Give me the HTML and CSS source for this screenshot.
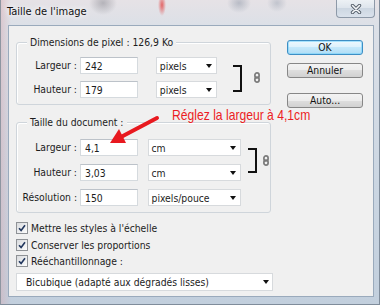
FILE: index.html
```html
<!DOCTYPE html>
<html lang="fr">
<head>
    <meta charset="UTF-8">
    <meta name="viewport" content="width=device-width, initial-scale=1.0">
    <title>Taille de l'image</title>
    <link rel="stylesheet" href="styles.css">
</head>
<body>
    <div class="window">
        <div class="titlebar">
            <span class="title">Taille de l'image</span>
            <span class="close">
                <svg width="12" height="10" viewBox="0 0 12 10">
                    <path d="M2.5 1.5 L9.5 8.5 M9.5 1.5 L2.5 8.5" stroke="#56606c" stroke-width="3.4" stroke-linecap="round"/>
                    <path d="M2.5 1.5 L9.5 8.5 M9.5 1.5 L2.5 8.5" stroke="#f4f6f8" stroke-width="1.6" stroke-linecap="round"/>
                </svg>
            </span>
        </div>

        <div class="client">
            <div class="main">
                <div class="group group-pixels">
                    <div class="legend">Dimensions de pixel : 126,9 Ko</div>
                    <div class="fields fields-two">
                        <label class="lbl">Largeur :</label>
                        <input class="num" type="text" value="242">
                        <div class="combo combo-sm"><span>pixels</span><span class="caret"></span></div>

                        <label class="lbl">Hauteur :</label>
                        <input class="num" type="text" value="179">
                        <div class="combo combo-sm"><span>pixels</span><span class="caret"></span></div>

                        <span class="bracket"></span>
                        <svg class="chain" width="6" height="11" viewBox="0 0 6 11">
                            <rect x="0.9" y="0.9" width="4.2" height="5" rx="2.1" fill="none" stroke="#7a7a7a" stroke-width="1.7"/>
                            <rect x="0.9" y="5.1" width="4.2" height="5" rx="2.1" fill="none" stroke="#7a7a7a" stroke-width="1.7"/>
                        </svg>
                    </div>
                </div>

                <div class="group group-doc">
                    <div class="legend">Taille du document :</div>
                    <div class="fields fields-three">
                        <label class="lbl">Largeur :</label>
                        <input class="num" type="text" value="4,1">
                        <div class="combo combo-md"><span>cm</span><span class="caret"></span></div>

                        <label class="lbl">Hauteur :</label>
                        <input class="num" type="text" value="3,03">
                        <div class="combo combo-md"><span>cm</span><span class="caret"></span></div>

                        <label class="lbl">Résolution :</label>
                        <input class="num" type="text" value="150">
                        <div class="combo combo-md"><span>pixels/pouce</span><span class="caret"></span></div>

                        <span class="bracket"></span>
                        <svg class="chain" width="6" height="11" viewBox="0 0 6 11">
                            <rect x="0.9" y="0.9" width="4.2" height="5" rx="2.1" fill="none" stroke="#7a7a7a" stroke-width="1.7"/>
                            <rect x="0.9" y="5.1" width="4.2" height="5" rx="2.1" fill="none" stroke="#7a7a7a" stroke-width="1.7"/>
                        </svg>
                    </div>
                </div>

                <div class="opts">
                    <div class="opt"><span class="check"><svg width="8" height="8" viewBox="0 0 8 8"><path d="M1 4.2 L3.1 6.4 L7 1.2" fill="none" stroke="#22375e" stroke-width="1.6"/></svg></span>Mettre les styles à l'échelle</div>
                    <div class="opt"><span class="check"><svg width="8" height="8" viewBox="0 0 8 8"><path d="M1 4.2 L3.1 6.4 L7 1.2" fill="none" stroke="#22375e" stroke-width="1.6"/></svg></span>Conserver les proportions</div>
                    <div class="opt"><span class="check"><svg width="8" height="8" viewBox="0 0 8 8"><path d="M1 4.2 L3.1 6.4 L7 1.2" fill="none" stroke="#22375e" stroke-width="1.6"/></svg></span>Rééchantillonnage :</div>
                </div>

                <div class="combo combo-lg"><span>Bicubique (adapté aux dégradés lisses)</span><span class="caret"></span></div>
            </div>

            <div class="buttons">
                <button class="btn btn-default">OK</button>
                <button class="btn btn-cancel">Annuler</button>
                <button class="btn btn-auto">Auto...</button>
            </div>
        </div>
    </div>

    <!-- annotation drawn over the dialog -->
    <div class="note">Réglez la largeur à 4,1cm</div>
    <svg class="arrow" width="380" height="305" viewBox="0 0 380 305">
        <line x1="157" y1="118" x2="121" y2="137" stroke="#e8191f" stroke-width="4" stroke-linecap="round"/>
        <polygon points="110,143 126,143 119,129" fill="#e8191f"/>
    </svg>
</body>
</html>
```

FILE: styles.css
```css
* {
    box-sizing: border-box;
}

body {
    position: relative;
    margin: 0;
    width: 380px;
    height: 305px;
    overflow: hidden;
    background-color: #dfe7ef;
    color: #1c1c1c;
    font-family: "DejaVu Sans Condensed", "DejaVu Sans", sans-serif;
    font-stretch: condensed;
    font-size: 10.3px;
}

.window {
    width: 380px;
    height: 305px;
    display: flex;
    flex-direction: column;
    border-left: 1px solid #8e96a1;
    border-right: 1px solid #7f8c9b;
    border-bottom: 1px solid #7f8c9b;
    background:
        radial-gradient(ellipse 14px 12px at 102px 3px, rgba(140, 140, 148, 0.55), transparent),
        radial-gradient(ellipse 4px 11px at 161px 5px, rgba(226, 58, 58, 0.75), transparent),
        radial-gradient(ellipse 12px 10px at 238px 3px, rgba(140, 150, 166, 0.5), transparent),
        radial-gradient(ellipse 10px 9px at 276px 3px, rgba(150, 160, 176, 0.45), transparent),
        linear-gradient(to right, rgba(214, 170, 178, 0.45) 0, rgba(214, 170, 178, 0) 10px),
        linear-gradient(#e6e2e6 0, #dce0e7 25px, #cbd6e2 60%, #c2cfdd 100%);
}

.titlebar {
    height: 25px;
    display: flex;
    align-items: flex-start;
}

.title {
    margin: 5px 0 0 6px;
    font-size: 11px;
    line-height: 14px;
    color: #111;
    text-shadow: 0 0 5px #fff, 0 0 8px #fff;
}

.close {
    margin-left: auto;
    margin-right: 4px;
    width: 39px;
    height: 18px;
    display: flex;
    align-items: center;
    justify-content: center;
    border: 1px solid #8d99a8;
    border-top: none;
    border-radius: 0 0 4px 4px;
    background: linear-gradient(#edf1f5 0, #dde4ec 50%, #cdd7e2 50%, #dae2ec 100%);
}

.client {
    margin: 0 5px 0 7px;
    width: 366px;
    height: 272px;
    display: flex;
    border: 1px solid #9aaabc;
    background-color: #f0f0f0;
}

.main {
    width: 264px;
    padding-left: 7px;
}

.group {
    width: 255px;
    border: 1px solid #cfd5db;
    border-radius: 3px;
    box-shadow: inset 1px 1px 0 #fff;
}

.group-pixels {
    margin-top: 16px;
    padding-bottom: 6px;
}

.group-doc {
    margin-top: 17px;
    padding-bottom: 6px;
}

.legend {
    width: fit-content;
    margin: -7px 0 0 10px;
    padding: 0 3px;
    line-height: 12px;
    background-color: #f0f0f0;
}

.fields {
    display: grid;
    grid-template-columns: 60px auto auto auto auto;
    align-items: center;
}

.fields-two {
    margin-top: 9px;
    grid-template-rows: 17px 17px;
    row-gap: 7px;
}

.fields-three {
    margin-top: 11px;
    grid-template-rows: 17px 17px 17px;
    row-gap: 8px;
}

.lbl {
    text-align: right;
    line-height: 17px;
    white-space: nowrap;
}

.num {
    width: 58px;
    height: 17px;
    margin: 0 0 0 3px;
    padding: 0 0 0 4px;
    border: 1px solid #d5dade;
    border-top-color: #bcc2c9;
    background-color: #fff;
    color: #1c1c1c;
    font: inherit;
    outline: none;
}

.combo {
    height: 17px;
    display: flex;
    align-items: center;
    padding-left: 3px;
    border: 1px solid #d7dadd;
    background-color: #fff;
    white-space: nowrap;
}

.combo-sm {
    width: 61px;
    margin-left: 8px;
}

.combo-md {
    width: 93px;
    margin-left: 8px;
}

.combo-lg {
    width: 257px;
    height: 18px;
    margin-top: 3.5px;
    padding-left: 9px;
}

.caret {
    margin-left: auto;
    margin-right: 4px;
    border-left: 3px solid transparent;
    border-right: 3px solid transparent;
    border-top: 4px solid #111;
}

.combo-lg .caret {
    margin-right: 3px;
}

.bracket {
    grid-column: 4;
    grid-row: 1 / span 2;
    align-self: stretch;
    width: 9px;
    border: 2px solid #111;
    border-left: none;
}

.fields-two .bracket {
    margin: 8px 0 6px 6px;
}

.fields-three .bracket {
    margin: 9px 0 8px 6px;
}

.chain {
    grid-column: 5;
    grid-row: 1 / span 2;
    display: block;
    margin-left: 3px;
}

.fields-three .chain {
    margin-left: 4px;
}

.opts {
    margin-top: 7px;
}

.opt {
    height: 16.5px;
    display: flex;
    align-items: center;
    white-space: nowrap;
}

.check {
    width: 12px;
    height: 12px;
    margin-right: 3px;
    display: flex;
    align-items: center;
    justify-content: center;
    border: 1px solid #8f9296;
    background: linear-gradient(135deg, #d9dbde, #fdfdfd);
}

.buttons {
    margin-left: 14px;
    padding-top: 14px;
    display: flex;
    flex-direction: column;
}

.btn {
    width: 76px;
    height: 15px;
    padding: 0;
    border: 1px solid #878787;
    border-radius: 3px;
    background: linear-gradient(#f3f3f3 0, #ececec 50%, #dedede 50%, #d1d1d1 100%);
    color: #111;
    font: inherit;
    line-height: 13px;
}

.btn-default {
    border-color: #3d8ec4;
    background: linear-gradient(#edf8fe 0, #dcf1fc 50%, #c4e8fb 50%, #b0ddf5 100%);
    box-shadow: inset 0 0 0 1px rgba(120, 210, 250, 0.6);
}

.btn-cancel {
    margin-top: 8px;
}

.btn-auto {
    margin-top: 15px;
}

/* the font has no narrow cut here, so squeeze it */
.note {
    position: absolute;
    left: 172px;
    top: 108px;
    font-family: "Liberation Sans", sans-serif;
    font-size: 14.8px;
    line-height: 15px;
    color: #ec1c24;
    white-space: nowrap;
    transform: scaleX(0.82);
    transform-origin: 0 0;
}

.arrow {
    position: absolute;
    left: 0;
    top: 0;
    pointer-events: none;
}
```
